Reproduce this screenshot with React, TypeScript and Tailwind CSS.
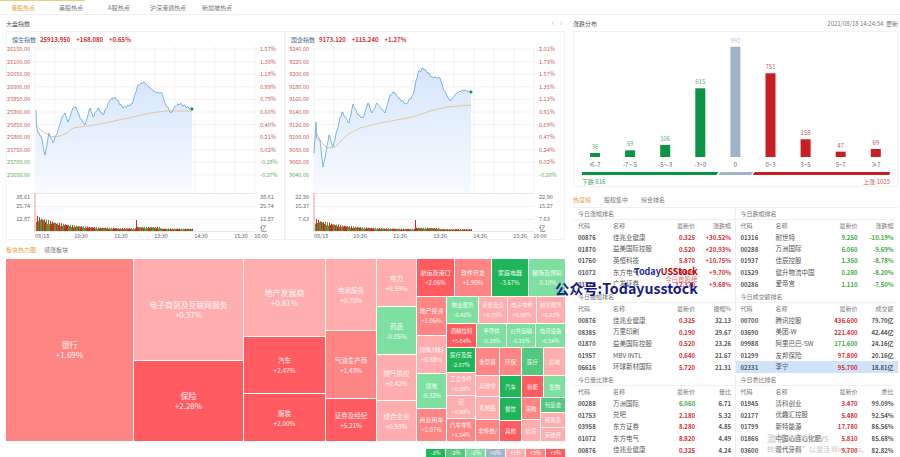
import { ChevronLeft, ChevronRight } from 'lucide-react';

const H = 'bg-[#ff5b60]';
const M = 'bg-[#ff8585]';
const L = 'bg-[#ffadae]';
const G1 = 'bg-[#7ee0a0]';
const G2 = 'bg-[#52c97e]';
const G3 = 'bg-[#1fb65a]';

function Cell({ n, p, c, s }: { n: string; p?: string; c: string; s: string }) {
  return (
    <div className={`flex shrink-0 flex-col items-center justify-center overflow-hidden whitespace-nowrap leading-[10px] text-white/90 ${c} ${s}`}>
      <span>{n}</span>
      {p && <span>{p}</span>}
    </div>
  );
}

function Treemap() {
  return (
    <div className="flex h-[182px] w-[559px] gap-px">
      <Cell n="银行" p="+1.69%" c={M} s="h-full w-[127px] text-[8px]" />
      <div className="flex w-[109px] flex-col gap-px">
        <Cell n="电子商贸及互联网服务" p="+0.37%" c={L} s="h-[101px] w-full text-[7.8px]" />
        <Cell n="保险" p="+2.28%" c={H} s="h-[80px] w-full text-[8px]" />
      </div>
      <div className="flex w-[81px] flex-col gap-px">
        <Cell n="地产发展商" p="+0.81%" c={L} s="h-[77px] w-full text-[8px]" />
        <Cell n="汽车" p="+2.47%" c={H} s="h-[56px] w-full text-[6.5px]" />
        <Cell n="服装" p="+2.00%" c={H} s="h-[47px] w-full text-[6.5px]" />
      </div>
      <div className="flex w-[50px] flex-col gap-px text-[6.5px]">
        <Cell n="电讯服务" p="+0.70%" c={L} s="h-[71px] w-full" />
        <Cell n="气油生产商" p="+1.43%" c={M} s="h-[67px] w-full" />
        <Cell n="证券及经纪" p="+5.21%" c={H} s="h-[42px] w-full" />
      </div>
      <div className="flex w-[39px] flex-col gap-px text-[6.5px]">
        <Cell n="电力" p="+0.59%" c={L} s="h-[47px] w-full" />
        <Cell n="药品" p="-0.05%" c={G1} s="h-[47px] w-full" />
        <Cell n="燃气供应" p="+0.42%" c={L} s="h-[45px] w-full" />
        <Cell n="综合企业" p="+0.59%" c={L} s="h-[40px] w-full" />
      </div>
      <div className="flex w-[148px] flex-col gap-px text-[6px]">
        <div className="flex h-[37px] gap-px">
          <Cell n="航运及港口" p="+2.06%" c={H} s="h-full w-[37px]" />
          <Cell n="软件开发" p="+1.90%" c={M} s="h-full w-[36px]" />
          <Cell n="家庭电器" p="-3.67%" c={G3} s="h-full w-[36px]" />
          <Cell n="赌场及博彩" p="-0.10%" c={G1} s="h-full w-[36px]" />
        </div>
        <div className="flex h-[144px] gap-px">
          <div className="flex w-[29px] flex-col gap-px">
            <Cell n="地产投资" p="+1.06%" c={M} s="h-[38px] w-full" />
            <Cell n="建筑材料" p="+0.88%" c={L} s="h-[37px] w-full" />
            <Cell n="煤炭" p="-0.32%" c={G1} s="h-[34px] w-full" />
            <Cell n="商业用车" p="+1.07%" c={M} s="h-[32px] w-full" />
          </div>
          <div className="flex w-[118px] flex-col gap-px text-[5.5px]">
            <div className="flex h-[26px] gap-px">
              <Cell n="物业服务" p="-0.42%" c={G1} s="h-full w-[31px]" />
              <Cell n="黄金及贵" p="+0.75%" c={L} s="h-full w-[28px]" />
              <Cell n="电子零件" p="+0.99%" c={L} s="h-full w-[28px]" />
              <Cell n="航空服务" p="+0.83%" c={L} s="h-full w-[28px]" />
            </div>
            <div className="flex h-[23px] gap-px">
              <Cell n="酒精饮料" p="+5.64%" c={H} s="h-full w-[29px]" />
              <Cell n="半导体" p="-0.39%" c={G1} s="h-full w-[29px]" />
              <Cell n="公共运输" p="-0.21%" c={G1} s="h-full w-[28px]" />
              <Cell n="电讯设备" p="-0.54%" c={G1} s="h-full w-[29px]" />
            </div>
            <div className="flex h-[93px] gap-px">
              <div className="flex w-[28px] flex-col gap-px">
                <Cell n="医疗及医" p="-2.67%" c={G3} s="h-[24px] w-full" />
                <Cell n="工业零件" p="+0.08%" c={L} s="h-[22px] w-full" />
                <Cell n="铝" p="+0.80%" c={L} s="h-[22px] w-full" />
                <Cell n="汽车零售" p="+1.54%" c={M} s="h-[22px] w-full" />
              </div>
              <div className="flex w-[23px] flex-col gap-px">
                <Cell n="重型基" c={M} s="h-[27px] w-full" />
                <Cell n="其他零" c={L} s="h-[20px] w-full" />
                <Cell n="乳制品" c={L} s="h-[22px] w-full" />
                <Cell n="非传统/" c={M} s="h-[21px] w-full" />
              </div>
              <div className="flex w-[65px] flex-col gap-px">
                <div className="flex h-[27px] gap-px">
                  <Cell n="环保" c={M} s="h-full w-[21px]" />
                  <Cell n="医疗" c={G2} s="h-full w-[21px]" />
                  <Cell n="房地" c={L} s="h-full w-[21px]" />
                </div>
                <div className="flex h-[21px] gap-px">
                  <Cell n="汽车" c={G3} s="h-full w-[21px]" />
                  <Cell n="新能" c={H} s="h-full w-[21px]" />
                  <Cell n="生物" c={G1} s="h-full w-[21px]" />
                </div>
                <div className="flex h-[43px] gap-px">
                  <div className="flex w-[21px] flex-col gap-px">
                    <Cell n="餐饮" c={G3} s="h-[22px] w-full" />
                    <Cell n="其他" c={H} s="h-[20px] w-full" />
                  </div>
                  <div className="flex w-[18px] flex-col gap-px">
                    <Cell n="采购" c={M} s="h-[21px] w-full" />
                    <Cell n="信贷" c={L} s="h-[21px] w-full" />
                  </div>
                  <div className="flex w-[24px] flex-col gap-px">
                    <Cell n="包装食" c={G2} s="h-[14px] w-full" />
                    <Cell n="铁路及" c={L} s="h-[14px] w-full" />
                    <Cell n="系统开" c={L} s="h-[13px] w-full" />
                  </div>
                </div>
              </div>
            </div>
          </div>
        </div>
      </div>
    </div>
  );
}

const hsiLine = '36,110 36.7,127 38,133 41,136 45,155 49,133 53,143 58,130 62,117 65,113 68,122 73,108 76,107 80,118 85,125 90,108 93,117 98,108 103,115 110,100 115,97 123,108 132,104 138,85 144,82 148,86 155,92 162,93 165,103 171,113 175,106 180,104 187,107 192,109';
const hsiAvg = '36,125 43,132 50,136 55,137 60,136 67,133 73,128 100,124 133,117 150,113 167,111 192,111';
const hsceiLine = '314,153 316,122 316.5,137 320,140 323,167 325,158 329,135 333,147 337,130 342,112 345,117 349,123 353,104 358,115 363,118 368,103 372,113 377,103 385,113 390,95 394,92 398,98 406,104 413,95 418,73 423,68 432,77 440,78 443,88 450,101 457,93 463,90 471,92';
const hsceiAvg = '316,133 322,143 327,148 335,147 347,135 360,128 380,123 413,117 430,111 447,107 471,105';

// ziggy line: fill in the key points at about 1px with a small fixed wobble
function wobble(line: string) {
  const pts = line.split(' ').map((p) => p.split(',').map(Number));
  const out: string[] = [];
  pts.forEach((p, i) => {
    out.push(`${p[0]},${p[1]}`);
    const next = pts[i + 1];
    if (!next) return;
    for (let x = p[0] + 1; x < next[0] - 0.5; x += 1) {
      const y = p[1] + ((next[1] - p[1]) * (x - p[0])) / (next[0] - p[0]);
      const n = Math.sin(x * 1.9) * 0.8 + Math.sin(x * 4.3) * 0.5;
      out.push(`${x},${(y + n).toFixed(1)}`);
    }
  });
  return out.join(' ');
}

type ChartProps = {
  ox: number;
  line: string;
  avg: string;
  left: string[];
  right: string[];
  vol: string[];
  endY: number;
  scale: number;
};

function IndexChart({ ox, line, avg, left, right, vol, endY, scale }: ChartProps) {
  const first = line.split(' ')[0].split(',')[0];
  const last = line.split(' ').slice(-1)[0].split(',')[0];
  const jagged = wobble(line);
  const bars = Array.from({ length: 157 }, (_, i) => {
    const noise = 0.7 + 0.5 * Math.abs(Math.sin(i * 1.7));
    let h = (2 + 11 * Math.exp(-i / 28)) * noise * scale;
    if (i === 100) h = 11;
    if (i > 100 && i < 125) h *= 1.6;
    const up = Math.sin(i * 0.9) + Math.sin(i * 2.3) > 0;
    return { x: ox + 36 + i, h, up };
  });
  return (
    <svg width={277} height={193} viewBox={`${ox + 7} 46 277 193`}>
      <defs>
        <linearGradient id={`fill${ox}`} x1="0" y1="0" x2="0" y2="1">
          <stop offset="0" stopColor="#d6e6fb" />
          <stop offset="1" stopColor="#f8fbff" />
        </linearGradient>
      </defs>
      {left.map((_, i) => (
        <line key={i} x1={ox + 34.5} x2={ox + 255} y1={49 + i * 12.6} y2={49 + i * 12.6} stroke="#f3f3f3" strokeWidth="1" />
      ))}
      {Array.from({ length: 12 }, (_, i) => (
        <line key={i} x1={ox + 35 + i * 20} x2={ox + 35 + i * 20} y1={46} y2={193} stroke="#f3f3f3" strokeWidth="1" />
      ))}
      <polygon points={`${first},193 ${jagged} ${last},193`} fill={`url(#fill${ox})`} />
      <polyline points={avg} fill="none" stroke="#e5c79c" strokeWidth="1" />
      <polyline points={jagged} fill="none" stroke="#5da5d8" strokeWidth="0.8" />
      <circle cx={last} cy={endY} r="1.5" fill="#0a9a1e" />
      <line x1={ox + 34.5} x2={ox + 255} y1={193.5} y2={193.5} stroke="#e8e8e8" />
      <line x1={ox + 34.5} x2={ox + 255} y1={206.5} y2={206.5} stroke="#f3f3f3" />
      <line x1={ox + 34.5} x2={ox + 255} y1={219.5} y2={219.5} stroke="#f3f3f3" />
      <line x1={ox + 34.5} x2={ox + 255} y1={231.5} y2={231.5} stroke="#e8e8e8" />
      <rect x={ox + 34.5} y={193} width="1" height="38" fill="#e89a9a" />
      {bars.map((b) => (
        <rect key={b.x} x={b.x} y={231 - b.h} width="1" height={b.h} fill={b.up ? '#d8232a' : '#4f9a2f'} />
      ))}
      <g fontSize="5.5" fill="#c65a5a" textAnchor="end">
        {left.map((t, i) => (
          <text key={t} x={ox + 30} y={51 + i * 12.6} fill={i >= left.length - (ox ? 1 : 2) ? '#5cae5c' : '#c65a5a'}>{t}</text>
        ))}
      </g>
      <g fontSize="5.5" fill="#c65a5a">
        {right.map((t, i) => (
          <text key={t} x={ox + 260} y={51 + i * 12.6} fill={t[0] === '-' ? '#5cae5c' : '#c65a5a'}>{t}</text>
        ))}
      </g>
      <g fontSize="5.5" fill="#666">
        {vol.map((t, i) => (
          <text key={t} x={ox + 30} y={[199, 208, 221][i]} textAnchor="end">{t}</text>
        ))}
        {vol.map((t, i) => (
          <text key={t} x={ox + 260} y={[199, 208, 221][i]}>{t}</text>
        ))}
        <text x={ox + 260} y={230.5} fontSize="6.5">亿</text>
        <text x={ox + 35} y={238}>08/18</text>
        <text x={ox + 81} y={238} textAnchor="middle">10:30</text>
        <text x={ox + 121} y={238} textAnchor="middle">11:30</text>
        <text x={ox + 161} y={238} textAnchor="middle">13:30</text>
        <text x={ox + 201} y={238} textAnchor="middle">14:30</text>
        <text x={ox + 241} y={238} textAnchor="middle">15:30</text>
        <text x={ox + 261} y={238} textAnchor="middle">16:00</text>
      </g>
    </svg>
  );
}

function IndexCard({ name, nums, w, children }: { name: string; nums: string[]; w: string; children: React.ReactNode }) {
  return (
    <div className={`h-[209px] border border-[#f2f2f2] ${w}`}>
      <div className="flex h-[14px] items-center gap-[4px] pl-[5px] text-[6px]">
        <span className="text-[#46688f]">{name}</span>
        <span className="font-semibold text-[#d42a30]">{nums[0]}</span>
        <span className="ml-[2px] font-semibold text-[#d42a30]">{nums[1]}</span>
        <span className="ml-[2px] font-semibold text-[#d42a30]">{nums[2]}</span>
      </div>
      {children}
    </div>
  );
}

const dist = [
  { l: '≤-7', v: '36', top: 153, c: '#0b9444', t: '#5cb57a' },
  { l: '-7~-5', v: '59', top: 150.3, c: '#0b9444', t: '#5cb57a' },
  { l: '-5~-3', v: '106', top: 145, c: '#0b9444', t: '#5cb57a' },
  { l: '-3~0', v: '615', top: 88.3, c: '#0b9444', t: '#5cb57a' },
  { l: '0', v: '992', top: 46.7, c: '#a0b3cb', t: '#b5c3d5' },
  { l: '0~3', v: '751', top: 73.3, c: '#c81e24', t: '#c65a5a' },
  { l: '3~5', v: '158', top: 139.3, c: '#c81e24', t: '#c65a5a' },
  { l: '5~7', v: '47', top: 151.7, c: '#c81e24', t: '#c65a5a' },
  { l: '≥7', v: '69', top: 149, c: '#c81e24', t: '#c65a5a' },
];

function DistChart() {
  return (
    <svg width={323} height={154} viewBox="574 32 323 154">
      {dist.map((d, i) => {
        const x = 590 + i * 35.1;
        return (
          <g key={d.l}>
            <rect x={x} y={d.top} width="10" height={157 - d.top} fill={d.c} />
            <text x={x + 5} y={d.top - 4} fontSize="6" fill={d.t} textAnchor="middle">{d.v}</text>
            <text x={x + 5} y={167} fontSize="6" fill="#666" textAnchor="middle">{d.l}</text>
          </g>
        );
      })}
      <polygon points="582,172 718.5,172 716.5,175 582,175" fill="#0b9444" />
      <polygon points="720.5,172 753,172 751,175 718.5,175" fill="#a0b3cb" />
      <polygon points="754.5,172 890,172 889.5,175 753,175" fill="#c81e24" />
      <text x={582} y={183.5} fontSize="6" fill="#3da35d">下跌 816</text>
      <text x={890} y={183.5} fontSize="6" fill="#c65a5a" textAnchor="end">上涨 1025</text>
    </svg>
  );
}

type Row = { code: string; name: string; price: string; val: string; up?: boolean; hi?: boolean; valClass?: string };

function RankTable({ title, col, rows, left }: { title: string; col: string; rows: Row[]; left?: boolean }) {
  return (
    <div className={`h-[83px] w-[162.5px] ${left ? 'border-r border-[#eeeeee]' : ''}`}>
      <div className="flex h-[12px] items-center border-b border-[#f2f2f2] pl-[5px] text-[6px] text-[#777]">{title}</div>
      <div className="grid h-[11.7px] grid-cols-[40px_53px_34px_35px] items-center text-[6px] text-[#777]">
        <span className="pl-[5px]">代码</span>
        <span>名称</span>
        <span className="pr-[5px] text-right">最新价</span>
        <span className="pr-[4px] text-right">{col}</span>
      </div>
      {rows.map((r) => (
        <div key={r.code} className={`grid h-[11.7px] grid-cols-[40px_53px_34px_35px] items-center text-[6px] ${r.hi ? 'bg-[#cfe3fb]' : ''}`}>
          <span className="pl-[5px] font-semibold text-[#555]">{r.code}</span>
          <span className="whitespace-nowrap text-[6.5px] text-[#555]">{r.name}</span>
          <span className={`pr-[5px] text-right font-semibold ${r.up === false ? 'text-[#3fa83f]' : 'text-[#d42a30]'}`}>{r.price}</span>
          <span className={`pr-[4px] text-right font-semibold ${r.valClass ?? 'text-[#555]'}`}>{r.val}</span>
        </div>
      ))}
    </div>
  );
}

const upCls = 'text-[#d42a30]';
const downCls = 'text-[#3fa83f]';

const gainers: Row[] = [
  { code: '00876', name: '佳兆业健康', price: '0.325', val: '+30.52%', valClass: upCls },
  { code: '01870', name: '益美国际控股', price: '0.520', val: '+20.93%', valClass: upCls },
  { code: '01760', name: '英恒科技', price: '5.870', val: '+10.75%', valClass: upCls },
  { code: '01072', name: '东方电气', price: '8.820', val: '+9.70%', valClass: upCls },
  { code: '01776', name: '广发证券', price: '12.370', val: '+9.68%', valClass: upCls },
];
const losers: Row[] = [
  { code: '01316', name: '耐世特', price: '9.250', val: '-10.19%', up: false, valClass: downCls },
  { code: '00288', name: '万洲国际', price: '6.060', val: '-9.69%', up: false, valClass: downCls },
  { code: '01937', name: '佳辰控股', price: '1.350', val: '-8.78%', up: false, valClass: downCls },
  { code: '01529', name: '健升物流中国', price: '0.280', val: '-8.20%', up: false, valClass: downCls },
  { code: '00286', name: '爱帝宫', price: '1.110', val: '-7.50%', up: false, valClass: downCls },
];
const swings: Row[] = [
  { code: '00876', name: '佳兆业健康', price: '0.325', val: '32.13' },
  { code: '08385', name: '万里印刷', price: '0.190', val: '29.67' },
  { code: '01870', name: '益美国际控股', price: '0.520', val: '23.26' },
  { code: '01957', name: 'MBV INTL', price: '0.640', val: '21.67' },
  { code: '06616', name: '环球新材国际', price: '5.720', val: '21.31' },
];
const turnover: Row[] = [
  { code: '00700', name: '腾讯控股', price: '436.600', val: '79.70亿' },
  { code: '03690', name: '美团-W', price: '221.400', val: '42.44亿' },
  { code: '09988', name: '阿里巴巴-SW', price: '171.600', val: '24.16亿', up: false },
  { code: '01299', name: '友邦保险', price: '97.800', val: '20.16亿' },
  { code: '02331', name: '李宁', price: '95.700', val: '18.81亿', hi: true },
];
const volRatio: Row[] = [
  { code: '00288', name: '万洲国际', price: '6.060', val: '6.71', up: false },
  { code: '01753', name: '兑吧', price: '2.180', val: '5.32' },
  { code: '03958', name: '东方证券', price: '8.280', val: '4.85' },
  { code: '01072', name: '东方电气', price: '8.820', val: '4.49' },
  { code: '00876', name: '佳兆业健康', price: '0.325', val: '4.24' },
];
const bidRatio: Row[] = [
  { code: '01945', name: '清科创业', price: '3.470', val: '99.09%' },
  { code: '02177', name: '优趣汇控股', price: '5.480', val: '92.54%' },
  { code: '01799', name: '新特能源', price: '17.780', val: '86.56%' },
  { code: '01866', name: '中国心连心化肥', price: '5.810', val: '85.68%' },
  { code: '03600', name: '现代牙科', price: '9.700', val: '82.82%' },
];

const legend = [
  { t: '-3%', c: 'bg-[#1fb65a]' },
  { t: '-2%', c: 'bg-[#52c97e]' },
  { t: '-1%', c: 'bg-[#7ee0a0]' },
  { t: '+0%', c: 'bg-[#a0b3cb]' },
  { t: '+1%', c: 'bg-[#ffadae]' },
  { t: '+2%', c: 'bg-[#ff8585]' },
  { t: '+3%', c: 'bg-[#ff5b60]' },
];

export default function App() {
  return (
    <div className="relative h-[457px] w-[900px] overflow-hidden bg-white font-['Noto_Sans_CJK_SC','Noto_Sans',sans-serif] text-[6px] text-[#555]">
      <div className="flex h-[15px] items-center border-b border-[#f0f0f0] text-[6px] text-[#777]">
        <div className="flex h-full w-[85px] items-center border-t border-[#f5c97a] pl-[11px] text-[#e8a33d]">港股热点</div>
        <div className="flex items-center">
          <span className="-ml-[26px] w-[49px]">美股热点</span>
          <span className="w-[42px]">A股热点</span>
          <span className="w-[52px]">沪深港通热点</span>
          <span>新加坡热点</span>
        </div>
      </div>
      <div className="flex">
        <div className="w-[573px] pl-[6px]">
          <div className="flex h-[16px] w-[559px] items-center justify-between">
            <span className="text-[#555]">大盘指数</span>
            <div className="flex text-[#888]">
              <ChevronLeft size={8} strokeWidth={1} />
              <ChevronRight size={8} strokeWidth={1} />
            </div>
          </div>
          <div className="flex">
            <IndexCard name="恒生指数" nums={['25913.950', '+168.080', '+0.65%']} w="w-[279px]">
              <IndexChart
                ox={0}
                line={hsiLine}
                avg={hsiAvg}
                endY={109}
                scale={1}
                left={['26150.00', '26100.00', '26050.00', '26000.00', '25950.00', '25900.00', '25850.00', '25800.00', '25750.00', '25700.00', '25650.00']}
                right={['1.57%', '1.38%', '1.18%', '0.99%', '0.79%', '0.60%', '0.40%', '0.21%', '0.02%', '-0.18%', '-0.37%']}
                vol={['38.61', '25.74', '12.87']}
              />
            </IndexCard>
            <IndexCard name="国企指数" nums={['9173.120', '+115.240', '+1.27%']} w="w-[280px]">
              <IndexChart
                ox={279}
                line={hsceiLine}
                avg={hsceiAvg}
                endY={92}
                scale={0.8}
                left={['9240.00', '9220.00', '9200.00', '9180.00', '9160.00', '9140.00', '9120.00', '9100.00', '9080.00', '9060.00', '9040.00']}
                right={['2.01%', '1.79%', '1.57%', '1.35%', '1.13%', '0.91%', '0.69%', '0.47%', '0.24%', '0.02%', '-0.20%']}
                vol={['22.90', '15.27', '7.63']}
              />
            </IndexCard>
          </div>
          <div className="flex h-[19px] items-center gap-[8px]">
            <span className="text-[#e8a33d]">板块热力图</span>
            <span className="text-[#777]">领涨板块</span>
          </div>
          <Treemap />
          <div className="mt-[8px] flex w-[559px] justify-end gap-px">
            {legend.map((x) => (
              <div key={x.t} className={`flex h-[9px] w-[19px] items-center justify-center text-[5.5px] leading-none text-white ${x.c}`}>{x.t}</div>
            ))}
          </div>
        </div>
        <div className="w-[327px]">
          <div className="flex h-[16px] w-[325px] items-center justify-between text-[#777]">
            <span className="text-[#555]">涨跌分布</span>
            <span>2021/08/18 14:24:54&nbsp;&nbsp;更新</span>
          </div>
          <div className="h-[156px] w-[325px] border border-[#f2f2f2]">
            <DistChart />
          </div>
          <div className="flex h-[20px] items-center gap-[13px] pt-[4px]">
            <span className="text-[#e8a33d]">热度榜</span>
            <span className="text-[#777]">股权集中</span>
            <span className="text-[#777]">综合排名</span>
          </div>
          <div className="grid w-[325px] grid-cols-2 border-t border-[#f0f0f0]">
            <RankTable left title="今日涨幅排名" col="涨跌幅" rows={gainers} />
            <RankTable title="今日跌幅排名" col="涨跌幅" rows={losers} />
            <RankTable left title="今日振幅排名" col="振幅%" rows={swings} />
            <RankTable title="今日成交额排名" col="成交额" rows={turnover} />
            <RankTable left title="今日量比排名" col="量比" rows={volRatio} />
            <RankTable title="今日委比排名" col="委比" rows={bidRatio} />
          </div>
        </div>
      </div>
      <div className="absolute left-[634px] top-[266px] whitespace-nowrap text-[9px] font-bold leading-[12px]">
        <span className="text-[#1a2a9c]">Today</span>
        <span className="text-[#c00000]">USStock</span>
      </div>
      <div className="absolute left-[665px] top-[275px] whitespace-nowrap text-[6.5px] leading-[8px] text-[#e57373]">今日首股榜</div>
      <div className="absolute left-[555px] top-[279px] whitespace-nowrap text-[14.2px] font-semibold leading-[18px] text-[#1a1a8c]">公众号:Todayusstock</div>
      <div className="absolute left-[767px] top-[432px] whitespace-nowrap text-[9.5px] leading-[12px] text-[#a8a8a8]/70">激活 Windows</div>
      <div className="absolute left-[767px] top-[445px] whitespace-nowrap text-[7px] leading-[9px] text-[#a8a8a8]/70">转到“设置”以激活 Windows。</div>
    </div>
  );
}
